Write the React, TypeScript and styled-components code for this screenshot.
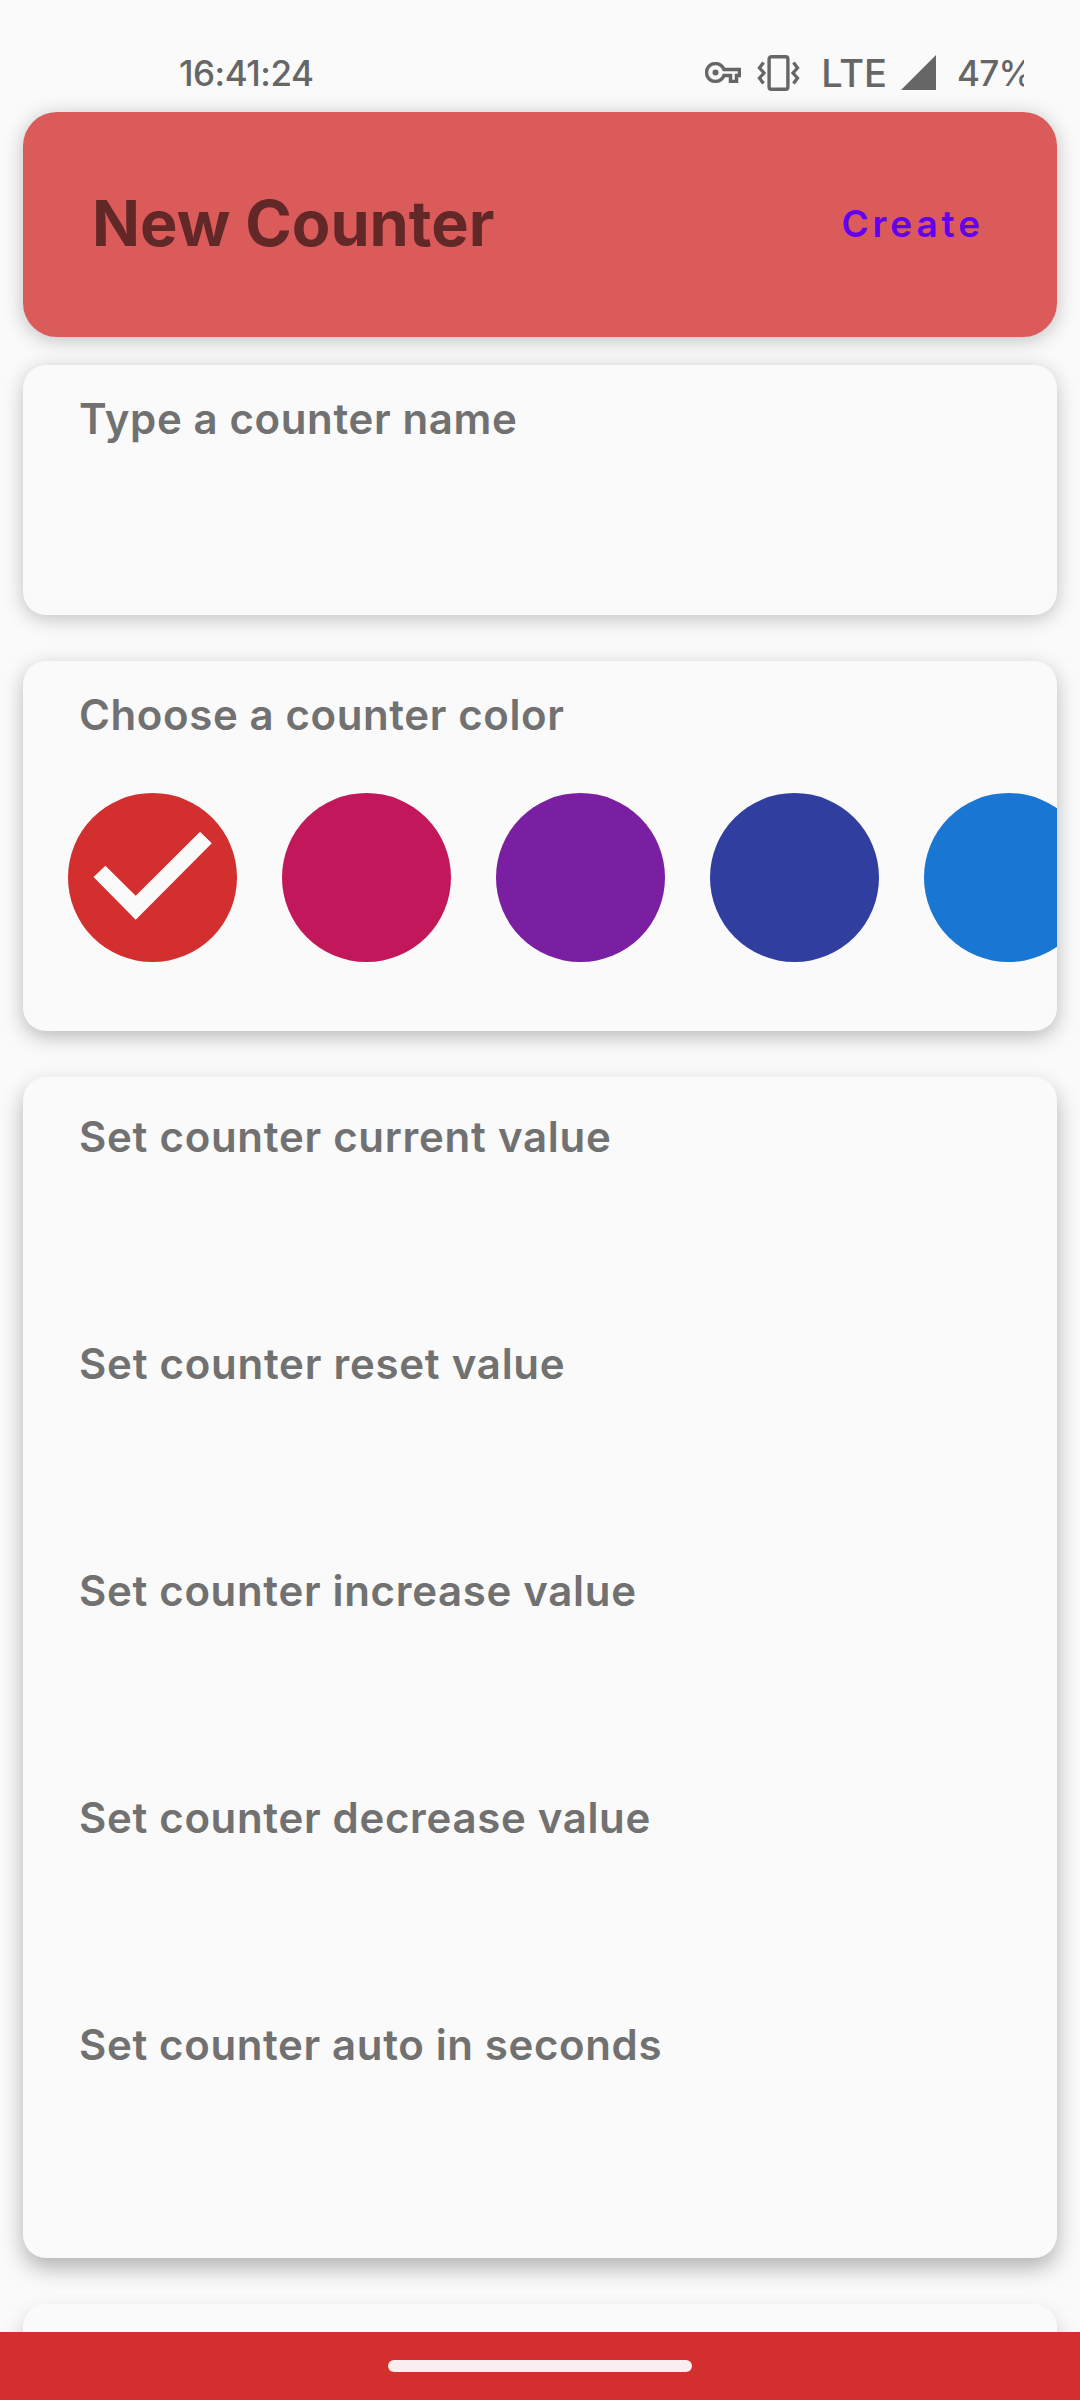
import React, { useState } from 'react';
import styled, { createGlobalStyle } from 'styled-components';

const GlobalStyle = createGlobalStyle`
  *, *::before, *::after { box-sizing: border-box; }
  body { margin: 0; background: #fafafa; }
`;

const Screen = styled.div`
  display: flex;
  flex-direction: column;
  width: 1080px;
  height: 2400px;
  overflow: hidden;
  background: #fafafa;
  font-family: Inter, 'Open Sans', sans-serif;
`;

const StatusBar = styled.div`
  display: flex;
  flex: none;
  align-items: center;
  justify-content: space-between;
  height: 112px;
  padding: 33px 56px 0 179px;
  color: #666;
  font-size: 35px;
  font-weight: 500;
  line-height: 44px;
`;

const Clock = styled.time`
  letter-spacing: -0.5px;
`;

const Indicators = styled.div`
  display: flex;
  align-items: center;

  svg { display: block; fill: currentColor; }
`;

const Network = styled.span`
  margin: 0 14px 0 20px;
  font-size: 38px;
  letter-spacing: 0;
`;

const Battery = styled.span`
  width: 67px;
  margin-left: 21px;
  overflow: hidden;
  white-space: nowrap;
  letter-spacing: -0.7px;
`;

const KeyIcon = styled.svg`
  width: 36px;
  height: 21px;
`;

const VibrateIcon = styled.svg`
  width: 43px;
  height: 36px;
  margin-left: 16px;
  margin-right: 1px;
`;

const SignalIcon = styled.svg`
  width: 35px;
  height: 35px;
`;

const Header = styled.header`
  display: flex;
  flex: none;
  align-items: center;
  justify-content: space-between;
  height: 225px;
  margin: 0 23px;
  padding: 0 73px 2px 69px;
  border-radius: 34px;
  background: #db5b5a;
  box-shadow: 0 3px 20px rgba(0, 0, 0, 0.24);
`;

const Title = styled.h1`
  margin: 0;
  padding-bottom: 1px;
  color: #622828;
  font-size: 63px;
  font-weight: 700;
  line-height: 76px;
`;

const CreateButton = styled.button`
  padding: 0;
  border: 0;
  background: none;
  color: #6200ee;
  font: 600 37px/44px Inter, 'Open Sans', sans-serif;
  letter-spacing: 3.9px;
`;

const Form = styled.main`
  display: flex;
  flex: 1;
  flex-direction: column;
  gap: 46px;
  min-height: 0;
  padding: 28px 23px 0;
  overflow: hidden;
`;

const Card = styled.section<{ $height: number; $top: number; $shadow: string }>`
  flex: none;
  height: ${(p) => p.$height}px;
  padding-top: ${(p) => p.$top}px;
  border-radius: 23px;
  background: #fafafa;
  box-shadow: ${(p) => p.$shadow};
`;

const Label = styled.div<{ $spacing: number }>`
  padding-left: 56px;
  color: #717171;
  font-size: 42px;
  font-weight: 600;
  line-height: 50px;
  letter-spacing: ${(p) => p.$spacing}px;
`;

const ValueField = styled.div`
  height: 227px;
`;

const Swatches = styled.div`
  display: flex;
  gap: 45px;
  margin-top: 53px;
  padding-left: 45px;
  overflow: hidden;
`;

const Swatch = styled.button<{ $color: string }>`
  flex: none;
  width: 169px;
  height: 169px;
  padding: 0;
  border: 0;
  border-radius: 50%;
  background: ${(p) => p.$color};
`;

const Check = styled.svg`
  display: block;
  width: 169px;
  height: 169px;
  fill: #fafafa;
`;

const NavBar = styled.footer`
  display: flex;
  flex: none;
  align-items: center;
  justify-content: center;
  height: 68px;
  background: #d32f2f;
`;

const Handle = styled.div`
  width: 304px;
  height: 12px;
  border-radius: 6px;
  background: #fbeeee;
`;

const colors = ['#d32f2f', '#c2185b', '#7b1fa2', '#303f9f', '#1976d2'];

const valueFields = [
  { text: 'Set counter current value', spacing: 0.72 },
  { text: 'Set counter reset value', spacing: 0.74 },
  { text: 'Set counter increase value', spacing: 0.67 },
  { text: 'Set counter decrease value', spacing: 0.67 },
  { text: 'Set counter auto in seconds', spacing: 0.63 },
];

export default function App() {
  const [selected, setSelected] = useState(0);

  return (
    <>
      <GlobalStyle />
      <Screen>
        <StatusBar>
          <Clock>16:41:24</Clock>
          <Indicators>
            <KeyIcon viewBox="0 5 24 14">
              <path
                fillRule="evenodd"
                stroke="currentColor"
                strokeWidth="0.35"
                d="M22 19h-6v-4h-2.68c-1.14 2.42-3.6 4-6.32 4-3.86 0-7-3.14-7-7s3.14-7 7-7c2.72 0 5.17 1.58 6.32 4H24v6h-2v4zm-4-2h2v-4h2v-2H11.94l-.23-.67C11.01 8.34 9.11 7 7 7c-2.76 0-5 2.24-5 5s2.24 5 5 5c2.11 0 4.01-1.34 4.71-3.33l.23-.67H18v4z"
              />
              <circle cx="7" cy="12" r="2" />
            </KeyIcon>
            <VibrateIcon viewBox="0 0 43 36">
              <path
                d="M6.5 7.5 2.5 13l4.5 5-4.5 5 4 5.5M36.5 7.5l4 5.5-4.5 5 4.5 5-4 5.5"
                fill="none"
                stroke="currentColor"
                strokeWidth="3.3"
              />
              <rect
                x="12.1"
                y="1.7"
                width="18.8"
                height="32.6"
                rx="2.2"
                fill="none"
                stroke="currentColor"
                strokeWidth="3.4"
              />
            </VibrateIcon>
            <Network>LTE</Network>
            <SignalIcon viewBox="0 0 35 35">
              <path d="M35 0v35H0z" />
            </SignalIcon>
            <Battery>47%</Battery>
          </Indicators>
        </StatusBar>

        <Header>
          <Title>New Counter</Title>
          <CreateButton>Create</CreateButton>
        </Header>

        <Form>
          <Card $height={250} $top={29} $shadow="0 4px 19px rgba(0, 0, 0, 0.23)">
            <Label $spacing={0.62}>Type a counter name</Label>
          </Card>

          <Card $height={370} $top={29} $shadow="0 6px 20px rgba(0, 0, 0, 0.26)">
            <Label $spacing={0.6}>Choose a counter color</Label>
            <Swatches>
              {colors.map((color, i) => (
                <Swatch key={color} $color={color} onClick={() => setSelected(i)}>
                  {selected === i && (
                    <Check viewBox="0 0 169 169">
                      <path d="M25.5 84 37.4 72.7 67.7 102.7 132 38.7 143.8 50.3 67.7 126.7z" />
                    </Check>
                  )}
                </Swatch>
              ))}
            </Swatches>
          </Card>

          <Card $height={1181} $top={35} $shadow="0 10px 22px rgba(0, 0, 0, 0.29)">
            {valueFields.map((field) => (
              <ValueField key={field.text}>
                <Label $spacing={field.spacing}>{field.text}</Label>
              </ValueField>
            ))}
          </Card>

          <Card $height={250} $top={29} $shadow="0 12px 22px rgba(0, 0, 0, 0.22)" />
        </Form>

        <NavBar>
          <Handle />
        </NavBar>
      </Screen>
    </>
  );
}
